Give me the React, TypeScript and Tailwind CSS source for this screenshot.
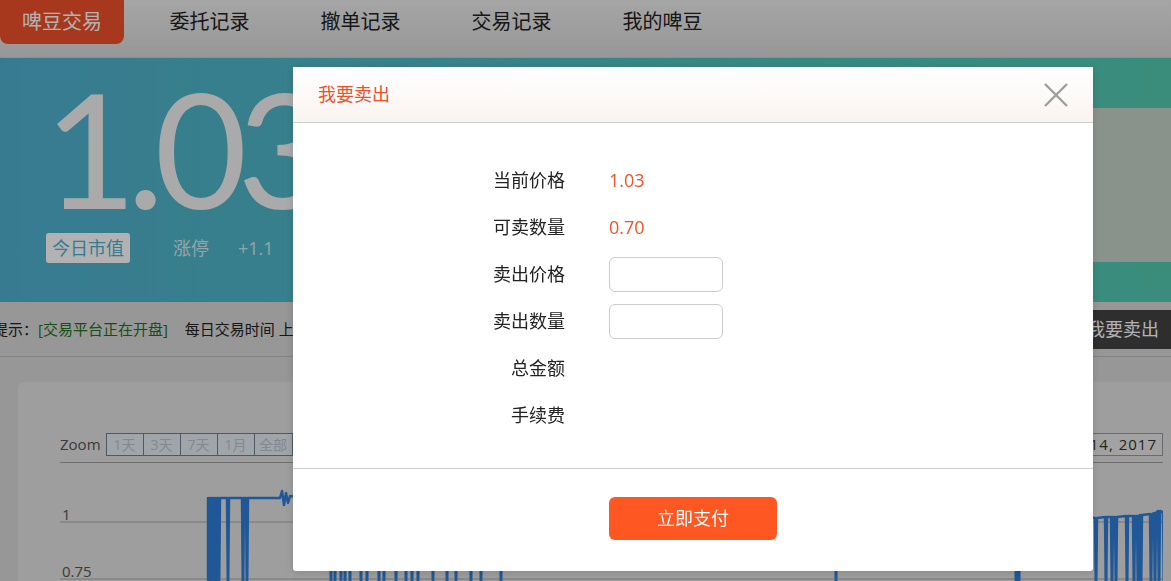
import React from "react";

const tabs = ["委托记录", "撤单记录", "交易记录", "我的啤豆"];
const ranges = ["1天", "3天", "7天", "1月", "全部"];

const rows = [
  { label: "当前价格", value: "1.03" },
  { label: "可卖数量", value: "0.70" },
  { label: "卖出价格", input: true },
  { label: "卖出数量", input: true },
  { label: "总金额" },
  { label: "手续费" },
];

// spikes of the price line: [x, top]
const spikes: [number, number][] = [
  [148, 35], [150, 35], [153, 35], [155, 35], [158, 35], [167, 35], [182, 35], [186, 35],
  [270, 36], [274, 36], [280, 36], [284, 36], [289, 36], [300, 37], [306, 37], [318, 37],
  [323, 37], [335, 38], [345, 38], [351, 38], [357, 38], [372, 39], [386, 39], [395, 39],
  [410, 40], [420, 40], [440, 40], [775, 44], [955, 46], [958, 46],
  [1035, 55], [1045, 54], [1051, 54], [1055, 54], [1066, 53], [1073, 53], [1077, 53],
  [1080, 52], [1090, 51], [1094, 50], [1098, 48], [1103, 49], [1106, 47],
];

function pricePath() {
  const parts: string[] = ["M148,140"];
  spikes.forEach(([x, top]) => {
    parts.push(`L${x},${top}`, `L${x + 1},140`, `L${x + 2},${top}`);
    if (x === 186) parts.push("L220,35", "L222,28", "L224,42", "L226,30", "L228,40", "L230,33");
  });
  return parts.join(" ");
}

const App = () => {
  return (
    <div className="relative h-[581px] w-full overflow-hidden bg-[#d8d8d8] font-['Open_Sans','Noto_Sans_CJK_SC',sans-serif]">
      {/* top nav */}
      <nav className="flex h-[58px] items-start border-b border-[#dcc8c8] bg-linear-to-b from-[#ededed] to-[#d9d9d9]">
        <div className="flex h-[44px] w-[124px] items-center justify-center rounded-b-lg bg-[#f0502a] text-[20px] text-white">
          啤豆交易
        </div>
        <div className="ml-[10px] flex">
          {tabs.map((t) => (
            <div key={t} className="flex h-[44px] w-[151px] items-center justify-center text-[20px] text-[#222]">
              {t}
            </div>
          ))}
        </div>
      </nav>

      {/* banner */}
      <section className="flex h-[244px] justify-between bg-linear-to-r from-[#4fb1d0] to-[#53cbb1]">
        <div className="pt-[9px]">
          <div className="ml-[44px] font-['Lato',sans-serif] text-[160px] leading-none tracking-[-10px] text-[#f4f4f4]">1.03</div>
          <div className="mt-[6px] flex items-center pl-[46px] text-[18px]">
            <span className="flex h-[30px] items-center rounded-[3px] bg-white px-[6px] text-[#4fb1d0]">今日市值</span>
            <span className="ml-[43px] text-white/75">涨停</span>
            <span className="ml-[29px] text-white/75">+1.1</span>
          </div>
        </div>
        <div className="mt-[50px] flex h-[154px] w-[291px] flex-col gap-[20px] bg-[#c5d3c8] pt-[30px] pl-[8px] text-[15px] text-white">
          <span>今日开盘 1.02</span>
          <span className="pl-[30px]">最高 1.05</span>
        </div>
      </section>

      {/* notice */}
      <div className="flex h-[55px] items-center justify-between border-b border-[#bdbdbd]">
        <p className="-ml-[7px] text-[15px] whitespace-nowrap text-[#222]">
          提示：<span className="text-[#25701b]">[交易平台正在开盘]</span>
          <span className="ml-[17px]">每日交易时间 上午 9:00-12:00 下午 13:00-17:00</span>
        </p>
        <div className="flex">
          <button className="h-[39px] w-[120px] bg-[#3a3a3a] text-[18px] text-white">我要买入</button>
          <button className="ml-[26px] h-[39px] w-[96px] bg-[#424242] text-[18px] text-white">我要卖出</button>
        </div>
      </div>

      {/* chart card */}
      <div className="mt-[25px] ml-[18px] rounded-tl-md bg-[#e3e3e3] pt-[51px] pr-[8px] pl-[42px]">
        <div className="flex items-start justify-between border-b border-[#9f9f9f] pb-[6px]">
          <div className="flex h-[23px] items-center">
            <span className="text-[15px] text-[#555]">Zoom</span>
            <div className="ml-[5px] flex h-[23px] divide-x divide-[#6f8090] border border-[#6f8090] bg-[#e6ecf2]">
              {ranges.map((r) => (
                <span key={r} className="flex w-[37px] items-center justify-center text-[14px] text-[#b9c4cf]">
                  {r}
                </span>
              ))}
            </div>
          </div>
          <div className="flex h-[23px] items-center border border-[#9a9a9a] bg-[#e8e8e8] pr-[5px] pl-[6px] text-[15px] tracking-[1px] text-[#333]">
            Mar 14, 2017
          </div>
        </div>
        <svg width="1103" height="130" className="block">
          <line x1="0" y1="59" x2="1103" y2="59" stroke="#a8a8a8" strokeWidth="1" />
          <line x1="0" y1="116" x2="1103" y2="116" stroke="#a8a8a8" strokeWidth="1" />
          <text x="2" y="57" fontSize="15" fill="#555">1</text>
          <text x="2" y="114" fontSize="15" fill="#555">0.75</text>
          <path d={pricePath()} fill="none" stroke="#2f7ed8" strokeWidth="2.5" strokeLinejoin="round" />
        </svg>
      </div>

      {/* modal */}
      <div className="fixed inset-0 bg-black/30">
        <div className="absolute top-[67px] left-[293px] flex h-[504px] w-[800px] flex-col rounded-[3px] bg-white shadow-[0_2px_10px_rgba(0,0,0,0.15)]">
          <div className="flex h-[56px] items-center justify-between border-b border-[#cfcfcf] bg-linear-to-b from-white to-[#faf4f1] pr-[24px] pl-[25px]">
            <h2 className="text-[18px] text-[#e9512d]">我要卖出</h2>
            <svg width="26" height="26" viewBox="0 0 26 26">
              <path d="M2 2 L24 24 M24 2 L2 24" stroke="#9e9e9e" strokeWidth="2.4" />
            </svg>
          </div>
          <div className="h-[346px] border-b border-[#cfcfcf] pt-[34px]">
            {rows.map((row) => (
              <div key={row.label} className="flex h-[47px] items-center text-[18px]">
                <span className="w-[272px] text-right text-[#222]">{row.label}</span>
                <span className="ml-[44px]">
                  {row.value && <span className="text-[#f0542a]">{row.value}</span>}
                  {row.input && (
                    <input className="block h-[35px] w-[114px] rounded-[6px] border border-[#cccccc] bg-white outline-none" />
                  )}
                </span>
              </div>
            ))}
          </div>
          <div className="flex justify-center pt-[28px]">
            <button className="h-[43px] w-[168px] rounded-[6px] bg-[#fe5722] text-[18px] text-white">立即支付</button>
          </div>
        </div>
      </div>
    </div>
  );
};

export default App;
